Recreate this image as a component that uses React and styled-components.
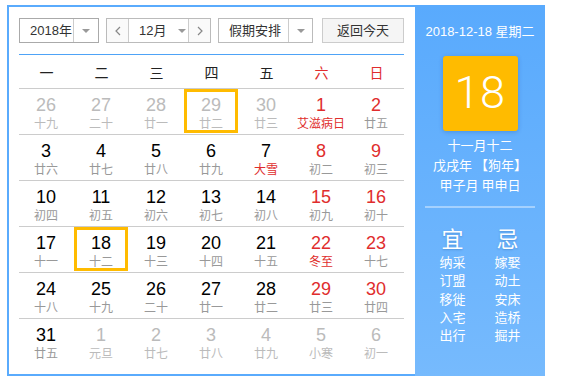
import React from "react";
import styled, { createGlobalStyle } from "styled-components";

const Global = createGlobalStyle`
  html, body { margin: 0; padding: 0; background: #fff; }
  body { font-family: "Liberation Sans", "Noto Sans CJK SC", sans-serif; }
  * { box-sizing: border-box; }
`;

const Frame = styled.div`
  display: flex;
  margin: 5px 0 0 7px;
  width: 538px;
  height: 371px;
`;

const Main = styled.div`
  width: 408px;
  border: 2px solid #5aabfd;
  border-right: none;
  padding: 11px 11px 9px 10px;
  background: #fff;
`;

const Toolbar = styled.div`
  display: flex;
  height: 25px;
  align-items: stretch;
  margin-bottom: 11px;
  font-size: 13px;
  color: #333;
`;

const Select = styled.div`
  display: flex;
  border: 1px solid ${(p) => p.$border || "#aaa"};
  width: ${(p) => p.$w}px;
  margin-right: ${(p) => p.$mr || 0}px;
  background: #fff;
`;

const SelectLabel = styled.div`
  flex: 1;
  padding-left: 10px;
  line-height: 23px;
  white-space: nowrap;
`;

const ArrowZone = styled.div`
  width: ${(p) => p.$w}px;
  border-left: 1px solid #ccc;
  display: flex;
  align-items: center;
  justify-content: center;
`;

const Tri = styled.span`
  width: 0;
  height: 0;
  border-left: 4px solid transparent;
  border-right: 4px solid transparent;
  border-top: 4px solid #999;
  margin-left: ${(p) => p.$ml || 0}px;
`;

const MonthGroup = styled.div`
  display: flex;
  border: 1px solid #bbb;
  margin-right: 7px;
  background: #fff;
`;

const NavBtn = styled.div`
  width: ${(p) => p.$w}px;
  display: flex;
  align-items: center;
  justify-content: center;
  background: #fafafa;
  border-left: ${(p) => (p.$divL ? "1px solid #ccc" : "none")};
  border-right: ${(p) => (p.$divR ? "1px solid #ccc" : "none")};
`;

const MonthBox = styled.div`
  width: 59px;
  display: flex;
  align-items: center;
  padding-left: 10px;
  line-height: 23px;
`;

const ReturnBtn = styled.div`
  width: 82px;
  border: 1px solid #ccc;
  background: #f5f5f5;
  text-align: center;
  line-height: 23px;
  margin-left: auto;
`;

const Head = styled.div`
  display: grid;
  grid-template-columns: repeat(7, 55px);
  height: 34px;
  border-top: 1px solid #4ea3f7;
  align-items: center;
  font-family: "Noto Sans CJK SC", sans-serif;
  font-size: 14px;
  line-height: 18px;
`;

const HeadCell = styled.div`
  text-align: center;
  color: ${(p) => (p.$red ? "#e02d2d" : "#222")};
  padding-top: 1px;
`;

const Row = styled.div`
  display: grid;
  grid-template-columns: repeat(7, 55px);
  height: 46px;
  border-top: 1px solid #ccc;
`;

const Cell = styled.div`
  width: 54px;
  height: 44px;
  border: 3px solid ${(p) => (p.$sel ? "#ffbb00" : "transparent")};
  padding-top: 3px;
  text-align: center;
`;

const Num = styled.div`
  font-family: "Liberation Sans", Arial, sans-serif;
  font-size: 18px;
  line-height: 20px;
  color: ${(p) => (p.$muted ? "#bbb" : p.$red ? "#e02d2d" : "#000")};
`;

const Lunar = styled.div`
  font-family: "Noto Sans CJK SC", sans-serif;
  font-size: 12px;
  line-height: 16px;
  white-space: nowrap;
  color: ${(p) => (p.$muted ? "#bbb" : p.$red ? "#e02d2d" : "#999")};
`;

const Side = styled.div`
  width: 130px;
  background: linear-gradient(#59aafd, #76bafd);
  display: flex;
  flex-direction: column;
  align-items: center;
  color: #fff;
  padding-top: 18px;
  font-family: "Liberation Sans", "Noto Sans CJK SC", sans-serif;
`;

const DateLine = styled.div`
  font-size: 13px;
  line-height: 18px;
  white-space: nowrap;
`;

const BigDay = styled.div`
  margin-top: 15px;
  width: 75px;
  height: 75px;
  background: #ffbb00;
  border-radius: 3px;
  box-shadow: 0 1px 4px rgba(0, 60, 140, 0.25);
  display: flex;
  align-items: center;
  justify-content: center;
  font-family: Roboto, "Liberation Sans", sans-serif;
  font-weight: 300;
  font-size: 45px;
  letter-spacing: 0.5px;
  padding-bottom: 2px;
`;

const LunarInfo = styled.div`
  margin-top: 4px;
  font-family: "Noto Sans CJK SC", sans-serif;
  font-size: 13px;
  line-height: 20px;
  text-align: center;
  white-space: nowrap;
`;

const Divider = styled.div`
  margin-top: 11px;
  width: 110px;
  height: 2px;
  background: rgba(255, 255, 255, 0.4);
`;

const YiJi = styled.div`
  margin-top: 14px;
  display: grid;
  grid-template-columns: 55px 55px;
`;

const YiCol = styled.div`
  display: flex;
  flex-direction: column;
  align-items: center;
  font-family: "Noto Sans CJK SC", sans-serif;
`;

const YiTitle = styled.div`
  font-size: 22px;
  line-height: 30px;
  margin-bottom: 1px;
  text-shadow: 0 1px 2px rgba(0, 50, 120, 0.25);
`;

const YiItem = styled.div`
  font-size: 13px;
  line-height: 18.3px;
`;

const Chevron = ({ dir }) => (
  <svg width="8" height="10" viewBox="0 0 8 10">
    <polyline
      points={dir === "l" ? "6,1 2,5 6,9" : "2,1 6,5 2,9"}
      fill="none"
      stroke="#888"
      strokeWidth="1.2"
    />
  </svg>
);

const weeks = ["一", "二", "三", "四", "五", "六", "日"];

// [num, lunar, muted, lunarRed, selected]
const rows = [
  [[26, "十九", 1], [27, "二十", 1], [28, "廿一", 1], [29, "廿二", 1, 0, 1], [30, "廿三", 1], [1, "艾滋病日", 0, 1], [2, "廿五"]],
  [[3, "廿六"], [4, "廿七"], [5, "廿八"], [6, "廿九"], [7, "大雪", 0, 1], [8, "初二"], [9, "初三"]],
  [[10, "初四"], [11, "初五"], [12, "初六"], [13, "初七"], [14, "初八"], [15, "初九"], [16, "初十"]],
  [[17, "十一"], [18, "十二", 0, 0, 1], [19, "十三"], [20, "十四"], [21, "十五"], [22, "冬至", 0, 1], [23, "十七"]],
  [[24, "十八"], [25, "十九"], [26, "二十"], [27, "廿一"], [28, "廿二"], [29, "廿三"], [30, "廿四"]],
  [[31, "廿五"], [1, "元旦", 1], [2, "廿七", 1], [3, "廿八", 1], [4, "廿九", 1], [5, "小寒", 1], [6, "初一", 1]],
];

const yi = ["纳采", "订盟", "移徙", "入宅", "出行"];
const ji = ["嫁娶", "动土", "安床", "造桥", "掘井"];

export default function App() {
  return (
    <>
      <Global />
      <Frame>
        <Main>
          <Toolbar>
            <Select $w={80} $mr={7}>
              <SelectLabel>2018年</SelectLabel>
              <ArrowZone $w={25}>
                <Tri />
              </ArrowZone>
            </Select>
            <MonthGroup>
              <NavBtn $w={22} $divR>
                <Chevron dir="l" />
              </NavBtn>
              <MonthBox>
                12月
                <Tri $ml={12} />
              </MonthBox>
              <NavBtn $w={22} $divL>
                <Chevron dir="r" />
              </NavBtn>
            </MonthGroup>
            <Select $w={95} $border="#bbb">
              <SelectLabel>假期安排</SelectLabel>
              <ArrowZone $w={24}>
                <Tri />
              </ArrowZone>
            </Select>
            <ReturnBtn>返回今天</ReturnBtn>
          </Toolbar>
          <Head>
            {weeks.map((w, i) => (
              <HeadCell key={w} $red={i >= 5}>
                {w}
              </HeadCell>
            ))}
          </Head>
          {rows.map((r, ri) => (
            <Row key={ri}>
              {r.map(([n, l, muted, lred, sel], ci) => (
                <Cell key={ci} $sel={!!sel}>
                  <Num $muted={!!muted} $red={ci >= 5}>
                    {n}
                  </Num>
                  <Lunar $muted={!!muted} $red={!!lred}>
                    {l}
                  </Lunar>
                </Cell>
              ))}
            </Row>
          ))}
        </Main>
        <Side>
          <DateLine>2018-12-18 星期二</DateLine>
          <BigDay>18</BigDay>
          <LunarInfo>
            十一月十二
            <br />
            戊戌年 【狗年】
            <br />
            甲子月 甲申日
          </LunarInfo>
          <Divider />
          <YiJi>
            <YiCol>
              <YiTitle>宜</YiTitle>
              {yi.map((t) => (
                <YiItem key={t}>{t}</YiItem>
              ))}
            </YiCol>
            <YiCol>
              <YiTitle>忌</YiTitle>
              {ji.map((t) => (
                <YiItem key={t}>{t}</YiItem>
              ))}
            </YiCol>
          </YiJi>
        </Side>
      </Frame>
    </>
  );
}
